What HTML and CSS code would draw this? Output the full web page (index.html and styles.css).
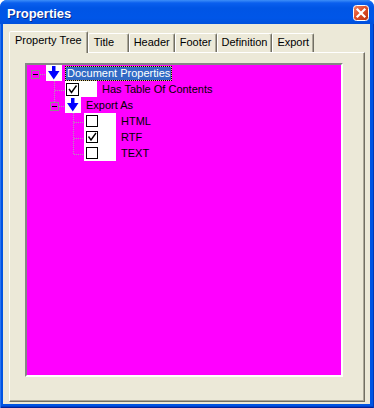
FILE: index.html
```html
<!DOCTYPE html>
<html>
<head>
    <title>Properties</title>
    <link rel="stylesheet" href="styles.css">
</head>
<body>
    <div class="window">
        <div class="titlebar">
            <span class="title">Properties</span>
            <span class="close">
                <svg width="16" height="16" viewBox="0 0 16 16">
                    <defs>
                        <linearGradient id="red" x1="0" y1="0" x2="1" y2="1">
                            <stop offset="0" stop-color="#f08a6c"/>
                            <stop offset="0.45" stop-color="#e0502a"/>
                            <stop offset="1" stop-color="#b8300e"/>
                        </linearGradient>
                    </defs>
                    <rect x="0.5" y="0.5" width="15" height="15" rx="3" fill="url(#red)" stroke="#fff"/>
                    <path d="M4.5 4.5 L11.5 11.5 M11.5 4.5 L4.5 11.5" stroke="#fff" stroke-width="2.2" stroke-linecap="square"/>
                </svg>
            </span>
        </div>

        <div class="frame">
            <div class="client">
                <div class="tabs">
                    <div class="tab active">Property Tree</div>
                    <div class="tab wide">Title</div>
                    <div class="tab">Header</div>
                    <div class="tab">Footer</div>
                    <div class="tab">Definition</div>
                    <div class="tab">Export</div>
                </div>

                <div class="panel">
                    <div class="tree">
                        <!-- connector lines behind the items -->
                        <svg class="lines" width="314" height="310">
                            <path d="M13 9.5 H19 M27.5 16 V37 M28 25.5 H38 M32 41.5 H38 M46.5 48 V90 M47 57.5 H57 M47 73.5 H57 M47 89.5 H57"
                                  stroke="#a8a8a8" stroke-dasharray="1 1" fill="none" shape-rendering="crispEdges"/>
                        </svg>

                        <div class="row level0">
                            <svg class="expander" width="9" height="9">
                                <rect x="0.5" y="0.5" width="8" height="8" fill="none" stroke="#8c8c8c" shape-rendering="crispEdges"/>
                                <path d="M2 4.5 H7" stroke="#000" shape-rendering="crispEdges"/>
                            </svg>
                            <svg class="icon" width="16" height="16">
                                <rect width="16" height="16" fill="#fff"/>
                                <rect x="6" y="1" width="3.5" height="6" fill="#0000ff"/>
                                <polygon points="2,6 13.5,6 7.75,14.5" fill="#0000ff"/>
                            </svg>
                            <span class="label selected">Document Properties</span>
                        </div>

                        <div class="row level1">
                            <span class="spacer"></span>
                            <svg class="icon" width="32" height="16">
                                <rect width="32" height="16" fill="#fff"/>
                                <rect x="1.5" y="2.5" width="12" height="12" fill="#fff" stroke="#000" shape-rendering="crispEdges"/>
                                <path d="M4 8 L6.5 11.5 L11.5 4.5" stroke="#000" stroke-width="1.4" fill="none"/>
                            </svg>
                            <span class="label">Has Table Of Contents</span>
                        </div>

                        <div class="row level1">
                            <svg class="expander" width="9" height="9">
                                <rect x="0.5" y="0.5" width="8" height="8" fill="none" stroke="#8c8c8c" shape-rendering="crispEdges"/>
                                <path d="M2 4.5 H7" stroke="#000" shape-rendering="crispEdges"/>
                            </svg>
                            <svg class="icon" width="16" height="16">
                                <rect width="16" height="16" fill="#fff"/>
                                <rect x="6" y="1" width="3.5" height="6" fill="#0000ff"/>
                                <polygon points="2,6 13.5,6 7.75,14.5" fill="#0000ff"/>
                            </svg>
                            <span class="label">Export As</span>
                        </div>

                        <div class="row level2">
                            <span class="spacer"></span>
                            <svg class="icon" width="32" height="16">
                                <rect width="32" height="16" fill="#fff"/>
                                <rect x="2.5" y="2.5" width="11" height="11" fill="#fff" stroke="#000" shape-rendering="crispEdges"/>
                            </svg>
                            <span class="label">HTML</span>
                        </div>

                        <div class="row level2">
                            <span class="spacer"></span>
                            <svg class="icon" width="32" height="16">
                                <rect width="32" height="16" fill="#fff"/>
                                <rect x="2.5" y="2.5" width="11" height="11" fill="#fff" stroke="#000" shape-rendering="crispEdges"/>
                                <path d="M4.5 7.5 L7 11 L12 4" stroke="#000" stroke-width="1.4" fill="none"/>
                            </svg>
                            <span class="label">RTF</span>
                        </div>

                        <div class="row level2">
                            <span class="spacer"></span>
                            <svg class="icon" width="32" height="16">
                                <rect width="32" height="16" fill="#fff"/>
                                <rect x="2.5" y="2.5" width="11" height="11" fill="#fff" stroke="#000" shape-rendering="crispEdges"/>
                            </svg>
                            <span class="label">TEXT</span>
                        </div>
                    </div>
                </div>
            </div>
        </div>
    </div>
</body>
</html>
```

FILE: styles.css
```css
* {
    box-sizing: border-box;
}

body {
    margin: 0;
    background: #ffffff;
    font-family: "Liberation Sans", Arial, sans-serif;
}

.window {
    width: 374px;
    height: 408px;
    display: flex;
    flex-direction: column;
    border-radius: 7px 7px 0 0;
    overflow: hidden;
    background: #0054e3;
}

.titlebar {
    height: 24px;
    display: flex;
    align-items: flex-start;
    justify-content: space-between;
    padding: 0 5px 0 7px;
    background: linear-gradient(#3d8ef8 0px, #0a5fee 3px, #0055e5 8px, #0056e8 18px, #0050dc 24px);
}

.title {
    margin-top: 6px;
    line-height: 15px;
    font-size: 13px;
    font-weight: bold;
    color: #ffffff;
    text-shadow: 1px 1px #0a2a8a;
}

.close {
    margin-top: 5px;
    width: 16px;
    height: 16px;
}

.close svg {
    display: block;
}

.frame {
    flex: 1;
    padding: 0 4px 4px 3px;
    background: #0054e3;
    box-shadow: inset 1px 0 #2a74f0, inset -1px 0 #0038b8, inset 0 -1px #00209a, inset 0 -2px #0040c8;
}

.client {
    height: 100%;
    display: flex;
    flex-direction: column;
    padding: 7px 5px 2px 6px;
    background: #ece9d8;
}

.tabs {
    position: relative;
    z-index: 1;
    height: 21px;
    display: flex;
    align-items: flex-end;
}

.tab {
    height: 19px;
    padding: 0 4px;
    border: 1px solid;
    border-bottom: 0;
    border-color: #ffffff #716f64 transparent #ffffff;
    border-radius: 2px 2px 0 0;
    box-shadow: inset -1px 0 #aca899;
    font-size: 11px;
    line-height: 17px;
    white-space: nowrap;
    color: #000000;
}

.tab.wide {
    min-width: 41px;
    padding-left: 5px;
}

.tab.active {
    height: 22px;
    margin-bottom: -1px;
    padding: 0 5px;
    background: #ece9d8;
}

.panel {
    flex: 1;
    padding: 10px 0 0 15px;
    border: 1px solid;
    border-color: #ffffff #716f64 #716f64 #ffffff;
    box-shadow: inset -1px -1px #aca899;
}

.tree {
    position: relative;
    width: 318px;
    height: 314px;
    border: 2px solid;
    border-color: #868686 #ffffff #ffffff #868686;
    background: #ff00ff;
}

.lines {
    position: absolute;
    left: 0;
    top: 0;
}

.row {
    position: relative;
    height: 16px;
    display: flex;
    align-items: flex-start;
}

.level0 {
    padding-left: 4px;
}

.level1 {
    padding-left: 23px;
}

.level2 {
    padding-left: 42px;
}

.expander,
.spacer {
    flex: none;
    width: 9px;
    height: 9px;
    margin: 5px 6px 0 0;
}

.icon {
    flex: none;
    display: block;
}

.label {
    margin: 1px 0 0 3px;
    padding: 0 1px;
    border: 1px solid transparent;
    font-size: 11px;
    line-height: 13px;
    white-space: nowrap;
    color: #000000;
}

.label.selected {
    color: #ffffff;
    border: 1px dotted #000000;
    background: linear-gradient(#316ac5, #316ac5) padding-box, #d8c480 border-box;
}
```
